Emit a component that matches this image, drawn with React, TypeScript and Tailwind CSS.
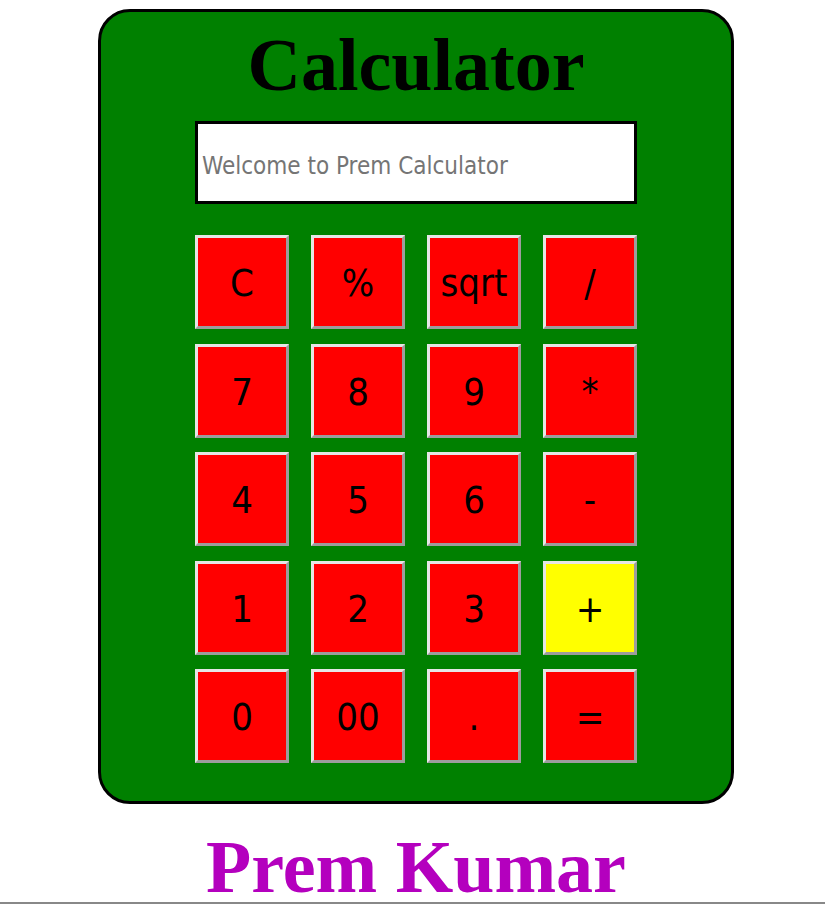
import React from 'react';

const keys = [
  'C', '%', 'sqrt', '/',
  '7', '8', '9', '*',
  '4', '5', '6', '-',
  '1', '2', '3', '+',
  '0', '00', '.', '=',
];

export default function App() {
  return (
    <div className="flex flex-col items-center pl-[7px] pt-[9px] bg-white min-h-[907px]">
      <div className="w-[636px] h-[795px] bg-[#008000] border-[3px] border-black rounded-[32px] flex flex-col items-center pt-[16px]">
        <h1 className="font-['Liberation_Serif',serif] font-bold text-[74px] leading-[74px] text-black">
          Calculator
        </h1>
        <input
          type="text"
          placeholder="Welcome to Prem Calculator"
          className="mt-[19px] w-[442px] h-[83px] bg-white border-[3px] border-black pl-[4px] pt-[6px] text-[24px] font-['DejaVu_Sans_Condensed','DejaVu_Sans',sans-serif] placeholder:text-[#757575] outline-none"
        />
        <div className="mt-[31px] grid grid-cols-4 gap-x-[22px] gap-y-[14.5px]">
          {keys.map(k => (
            <button
              key={k}
              className={`w-[94px] h-[94px] border-[3px] border-t-[#e6e6e6] border-l-[#e6e6e6] border-r-[#9d9d9d] border-b-[#9d9d9d] pt-[3px] text-[38px] text-black font-['DejaVu_Sans_Condensed','DejaVu_Sans',sans-serif] flex items-center justify-center ${k === '+' ? 'bg-[#ffff00]' : 'bg-[#ff0000]'}`}
            >
              {k}
            </button>
          ))}
        </div>
      </div>
      <div className="mt-[28px] font-['Liberation_Serif',serif] font-bold text-[74px] leading-[70px] text-[#b400be]">
        Prem Kumar
      </div>
      <div className="self-stretch -ml-[7px] h-[2px] bg-[#888888]" />
    </div>
  );
}
